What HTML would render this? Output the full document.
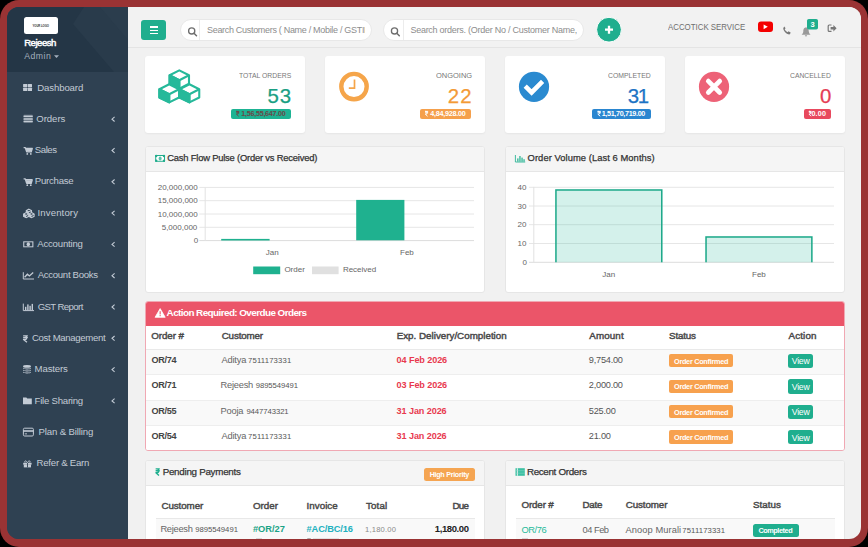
<!DOCTYPE html>
<html><head><meta charset="utf-8">
<style>
*{box-sizing:border-box;margin:0;padding:0}
html,body{width:868px;height:547px;overflow:hidden;background:#000}
body{position:relative;font-family:"Liberation Sans",sans-serif}
.frame{position:absolute;left:0;top:0;width:868px;height:547px;background:#9a3334;border-radius:19px}
.app{position:absolute;left:0;top:0;width:868px;height:547px;clip-path:inset(7px 7px 8px 7px round 12px);background:linear-gradient(to right,#2f4152 128px,#f1f1f1 128px)}
.a{position:absolute}
.t{position:absolute;line-height:1;white-space:nowrap;font-family:"Liberation Sans",sans-serif}
.card{position:absolute;background:#fff;border-radius:3px;box-shadow:0 1px 2px rgba(0,0,0,0.05)}
.panel{position:absolute;background:#fff;border:1px solid #e6e6e6;border-radius:3px;overflow:hidden}
.ph{position:absolute;left:0;top:0;right:0;background:#f5f5f5;border-bottom:1px solid #e6e6e6}
.badge{position:absolute;border-radius:2px}
svg{position:absolute;overflow:visible}
</style></head><body>
<div class="frame"></div>
<div class="app">
  <!-- sidebar -->
  <div class="a" style="left:7px;top:7px;width:121px;height:532px;background:#2f4152"></div>
  <div class="a" style="left:7px;top:7px;width:121px;height:65px;background:#243646"></div>
  <svg style="left:0;top:0" width="1" height="1"><path d="M84 7 L128 7 L128 72 L114 72 L73 24 Z" fill="#293b4b"/><path d="M100 7 L128 7 L128 40 Z" fill="#2b3d4d"/></svg>
  <div class="a" style="left:24px;top:17px;width:34px;height:17px;background:#fff;border-radius:2.5px"></div>
  <svg style="left:0;top:0" width="1" height="1"><path d="M54 55.2 L59 55.2 L56.5 58 Z" fill="#a3afbd"/></svg>
  <!-- topbar -->
  <div class="a" style="left:128px;top:7px;width:733px;height:41px;background:#f2f2f2;border-bottom:1px solid #e4e4e4"></div>
  <div class="a" style="left:141px;top:20px;width:25px;height:20px;background:#1fae8e;border-radius:3px"></div>
  <div class="a" style="left:149.5px;top:26.3px;width:8.5px;height:1.5px;background:#fff"></div>
  <div class="a" style="left:149.5px;top:29.5px;width:8.5px;height:1.5px;background:#fff"></div>
  <div class="a" style="left:149.5px;top:32.7px;width:8.5px;height:1.5px;background:#fff"></div>
  <div class="a" style="left:180px;top:19px;width:192px;height:22px;background:#fff;border:1px solid #e8e8e8;border-radius:11px;overflow:hidden">
  </div>
  <div class="a" style="left:199px;top:20px;width:1px;height:20px;background:#ececec"></div>
  <div class="a" style="left:383px;top:19px;width:201px;height:22px;background:#fff;border:1px solid #e8e8e8;border-radius:11px"></div>
  <div class="a" style="left:403px;top:20px;width:1px;height:20px;background:#ececec"></div>
  <svg style="left:0;top:0" width="1" height="1">
    <circle cx="191.7" cy="30.9" r="3.1" fill="none" stroke="#6e6e6e" stroke-width="1.3"/>
    <line x1="194" y1="33.2" x2="196.5" y2="35.7" stroke="#6e6e6e" stroke-width="1.5" stroke-linecap="round"/>
    <circle cx="394.5" cy="30.9" r="3.1" fill="none" stroke="#6e6e6e" stroke-width="1.3"/>
    <line x1="396.8" y1="33.2" x2="399.3" y2="35.7" stroke="#6e6e6e" stroke-width="1.5" stroke-linecap="round"/>
    <circle cx="609" cy="29.7" r="12.4" fill="#1fae8e" stroke="#fff" stroke-width="1"/>
    <line x1="605" y1="29.7" x2="613" y2="29.7" stroke="#fff" stroke-width="2.3"/>
    <line x1="609" y1="25.7" x2="609" y2="33.7" stroke="#fff" stroke-width="2.3"/>
    <rect x="758" y="21.5" width="15" height="10.5" rx="3" fill="#f40000"/>
    <path d="M763.6 24.4 L763.6 29.2 L767.8 26.8 Z" fill="#fff"/>
    <path d="M783.3 28 C783 30.5 786 34.2 789.5 34.4 L790.8 32.8 L788.6 31.3 L787.5 32.2 C786.3 31.6 785.2 30.4 784.7 29.3 L785.6 28.3 L784.3 26.6 Z" fill="#777"/>
    <path d="M806 27.6 C803.6 27.6 803.3 30 803.3 31.6 C803.3 33.2 802.2 34.2 801.6 34.8 L810.6 34.8 C810 34.2 808.8 33.2 808.8 31.6 C808.8 30 808.4 27.6 806 27.6 Z M804.8 35.2 C805 36 805.5 36.4 806 36.4 C806.5 36.4 807 36 807.2 35.2 Z" fill="#9a9a9a"/>
    <rect x="807" y="19" width="11" height="10.6" rx="1.8" fill="#1fae8e"/>
    <path d="M831.5 25 L829.2 25 C828.6 25 828.2 25.4 828.2 26 L828.2 30.4 C828.2 31 828.6 31.4 829.2 31.4 L831.5 31.4" fill="none" stroke="#777" stroke-width="1.2"/>
    <path d="M830.6 27 L833.4 27 L833.4 25 L836.6 28.2 L833.4 31.4 L833.4 29.4 L830.6 29.4 Z" fill="#777"/>
  </svg>
  <!-- KPI cards -->
  <div class="card" style="left:145px;top:56px;width:160px;height:77px"></div>
  <div class="card" style="left:325px;top:56px;width:160px;height:77px"></div>
  <div class="card" style="left:505px;top:56px;width:160px;height:77px"></div>
  <div class="card" style="left:685px;top:56px;width:160px;height:77px"></div>
  <div class="badge" style="left:231px;top:108.7px;width:60px;height:10.3px;background:#1db393"></div>
  <div class="badge" style="left:420px;top:108.8px;width:51px;height:10.2px;background:#f5a04c"></div>
  <div class="badge" style="left:592.2px;top:108.7px;width:58.8px;height:10.3px;background:#2a86d0"></div>
  <div class="badge" style="left:804px;top:108.8px;width:27px;height:10.2px;background:#e8495e"></div>
  <!-- KPI icons -->
  <svg style="left:0;top:0" width="1" height="1">
    <g fill="none" stroke="#26b99a" stroke-width="2.7" stroke-linejoin="round">
      <!-- cubes drawn below -->
    </g>
    <circle cx="354" cy="86.6" r="12.7" fill="none" stroke="#f5a54a" stroke-width="4.4"/>
    <path d="M354.5 79.5 L354.5 88.2 L348.8 88.2" fill="none" stroke="#f5a54a" stroke-width="1.7"/>
    <circle cx="534" cy="86.8" r="15.1" fill="#2a8ad0"/>
    <path d="M525.2 86.2 L531.6 92.4 L542.6 81.4" fill="none" stroke="#fff" stroke-width="4.6" stroke-linejoin="miter" stroke-miterlimit="3"/>
    <circle cx="714" cy="86.8" r="15.1" fill="#ed6277"/>
    <path d="M708.3 81.1 L719.7 92.5 M719.7 81.1 L708.3 92.5" fill="none" stroke="#fff" stroke-width="4.7" stroke-linecap="round"/>
  </svg>
  <svg style="left:0;top:0" width="1" height="1">
<path d="M179.30 70.40 L189.00 75.30 L189.00 83.80 L179.30 88.70 L169.60 83.80 L169.60 75.30 Z" fill="#fff" stroke="#26b99a" stroke-width="2.1" stroke-linejoin="round"/><path d="M169.60 75.30 L179.30 80.20 L179.30 88.70 L169.60 83.80 Z" fill="#26b99a" stroke="#26b99a" stroke-width="2.1" stroke-linejoin="round"/><path d="M169.60 75.30 L179.30 80.20 L189.00 75.30 M179.30 80.20 L179.30 88.70" fill="none" stroke="#26b99a" stroke-width="2.1" stroke-linejoin="round"/>
<path d="M169.20 84.30 L179.05 89.25 L179.05 97.45 L169.20 102.40 L159.35 97.45 L159.35 89.25 Z" fill="#fff" stroke="#26b99a" stroke-width="2.1" stroke-linejoin="round"/><path d="M159.35 89.25 L169.20 94.20 L169.20 102.40 L159.35 97.45 Z" fill="#26b99a" stroke="#26b99a" stroke-width="2.1" stroke-linejoin="round"/><path d="M159.35 89.25 L169.20 94.20 L179.05 89.25 M169.20 94.20 L169.20 102.40" fill="none" stroke="#26b99a" stroke-width="2.1" stroke-linejoin="round"/>
<path d="M189.40 84.30 L199.25 89.25 L199.25 97.45 L189.40 102.40 L179.55 97.45 L179.55 89.25 Z" fill="#fff" stroke="#26b99a" stroke-width="2.1" stroke-linejoin="round"/><path d="M179.55 89.25 L189.40 94.20 L189.40 102.40 L179.55 97.45 Z" fill="#26b99a" stroke="#26b99a" stroke-width="2.1" stroke-linejoin="round"/><path d="M179.55 89.25 L189.40 94.20 L199.25 89.25 M189.40 94.20 L189.40 102.40" fill="none" stroke="#26b99a" stroke-width="2.1" stroke-linejoin="round"/>
</svg>
  <!-- chart panels -->
  <div class="panel" style="left:145px;top:146px;width:340px;height:147px"><div class="ph" style="height:25px"></div></div>
  <div class="panel" style="left:505px;top:146px;width:340px;height:147px"><div class="ph" style="height:25px"></div></div>
  <svg style="left:0;top:0" width="1" height="1">
<line x1="199.3" y1="187.4" x2="474" y2="187.4" stroke="#e6e6e6" stroke-width="1"/>
<line x1="199.3" y1="200.7" x2="474" y2="200.7" stroke="#e6e6e6" stroke-width="1"/>
<line x1="199.3" y1="214.0" x2="474" y2="214.0" stroke="#e6e6e6" stroke-width="1"/>
<line x1="199.3" y1="227.3" x2="474" y2="227.3" stroke="#e6e6e6" stroke-width="1"/>
<line x1="199.3" y1="240.6" x2="474" y2="240.6" stroke="#dcdcdc" stroke-width="1"/>
<line x1="205.2" y1="187.4" x2="205.2" y2="241" stroke="#e2e2e2" stroke-width="1"/>
<rect x="221.2" y="238.9" width="48.4" height="1.6" fill="#1fb18f"/>
<rect x="356.2" y="199.9" width="48.2" height="40.4" fill="#1fb18f"/>
<rect x="253.2" y="266.5" width="27" height="7.7" fill="#1fb18f"/>
<rect x="312" y="266.5" width="26.6" height="7.7" fill="#e0e0e0"/>
<line x1="529" y1="187.3" x2="834" y2="187.3" stroke="#e6e6e6" stroke-width="1"/>
<line x1="529" y1="206.0" x2="834" y2="206.0" stroke="#e6e6e6" stroke-width="1"/>
<line x1="529" y1="224.7" x2="834" y2="224.7" stroke="#e6e6e6" stroke-width="1"/>
<line x1="529" y1="243.5" x2="834" y2="243.5" stroke="#e6e6e6" stroke-width="1"/>
<line x1="529" y1="262.3" x2="834" y2="262.3" stroke="#dcdcdc" stroke-width="1"/>
<line x1="533.8" y1="186.9" x2="533.8" y2="262.5" stroke="#e2e2e2" stroke-width="1"/>
<rect x="555.2" y="189.3" width="107.3" height="73" fill="rgba(38,185,154,0.2)"/>
<path d="M555.95 262.3 V190.05 H661.75 V262.3" fill="none" stroke="#1ea98a" stroke-width="1.5"/>
<rect x="705.3" y="236.2" width="107.3" height="26.1" fill="rgba(38,185,154,0.2)"/>
<path d="M706.05 262.3 V236.95 H811.85 V262.3" fill="none" stroke="#1ea98a" stroke-width="1.5"/>
<rect x="155.2" y="155" width="9.8" height="6.8" rx="0.6" fill="#22ad8d"/>
<rect x="156.2" y="156" width="7.8" height="4.8" fill="#fff"/>
<circle cx="156.2" cy="156" r="1.2" fill="#22ad8d"/>
<circle cx="164" cy="156" r="1.2" fill="#22ad8d"/>
<circle cx="156.2" cy="160.8" r="1.2" fill="#22ad8d"/>
<circle cx="164" cy="160.8" r="1.2" fill="#22ad8d"/>
<ellipse cx="160.1" cy="158.4" rx="1.5" ry="2.0" fill="#5cc4ad"/>
<path d="M515.4 155 V162 H525.2" fill="none" stroke="#2db696" stroke-width="0.9"/>
<rect x="517.2" y="158.4" width="1.3" height="3.2" fill="#2db696"/>
<rect x="519.3" y="156" width="1.3" height="5.6" fill="#2db696"/>
<rect x="521.4" y="157.6" width="1.3" height="4.0" fill="#2db696"/>
<rect x="523.4" y="159.2" width="1.3" height="2.4" fill="#2db696"/>
</svg>
  <!-- overdue panel -->
  <div class="panel" style="left:145px;top:301px;width:700px;height:149.5px;border-color:#f0a8b3">
    <div class="a" style="left:0;top:0;right:0;height:24px;background:#eb5569"></div>
    <div class="a" style="left:0;top:46.6px;right:0;height:25.3px;background:#f9f9f9;border-top:1px solid #e9e9e9"></div>
    <div class="a" style="left:0;top:71.9px;right:0;height:25.6px;background:#fff;border-top:1px solid #eeeeee"></div>
    <div class="a" style="left:0;top:97.5px;right:0;height:25.7px;background:#f9f9f9;border-top:1px solid #eeeeee"></div>
    <div class="a" style="left:0;top:123.2px;right:0;height:25.7px;background:#fff;border-top:1px solid #eeeeee"></div>
  </div>
  <svg style="left:0;top:0" width="1" height="1">
    <path d="M160.15 308.6 L165.2 317.3 L155.1 317.3 Z" fill="#fff" stroke="#fff" stroke-width="0.8" stroke-linejoin="round"/>
    <rect x="159.6" y="311.2" width="1.1" height="3.2" fill="#eb5569"/>
    <rect x="159.6" y="315.1" width="1.1" height="1.1" fill="#eb5569"/>
  </svg>
  <div class="badge" style="left:668.9px;top:354.10px;width:64.5px;height:13.4px;background:#f7a14e"></div>
<div class="badge" style="left:788.1px;top:353.90px;width:25.3px;height:14.2px;background:#1fae8e;border-radius:2.5px"></div>
<div class="badge" style="left:668.9px;top:379.55px;width:64.5px;height:13.4px;background:#f7a14e"></div>
<div class="badge" style="left:788.1px;top:379.35px;width:25.3px;height:14.2px;background:#1fae8e;border-radius:2.5px"></div>
<div class="badge" style="left:668.9px;top:405.00px;width:64.5px;height:13.4px;background:#f7a14e"></div>
<div class="badge" style="left:788.1px;top:404.80px;width:25.3px;height:14.2px;background:#1fae8e;border-radius:2.5px"></div>
<div class="badge" style="left:668.9px;top:430.45px;width:64.5px;height:13.4px;background:#f7a14e"></div>
<div class="badge" style="left:788.1px;top:430.25px;width:25.3px;height:14.2px;background:#1fae8e;border-radius:2.5px"></div>
  <!-- bottom panels -->
  <div class="panel" style="left:145px;top:460px;width:340px;height:120px">
    <div class="ph" style="height:25px"></div>
    <div class="a" style="left:10px;top:57px;width:319px;height:60px;background:#f9f9f9;border-top:1px solid #e8e8e8"></div>
  </div>
  <div class="badge" style="left:424px;top:468px;width:50.6px;height:12.7px;background:#f5a552;border-radius:2.5px"></div>
  <div class="panel" style="left:505px;top:460px;width:340px;height:120px">
    <div class="ph" style="height:25px"></div>
    <div class="a" style="left:10px;top:57px;width:319px;height:60px;background:#f9f9f9;border-top:1px solid #e8e8e8"></div>
  </div>
  <div class="badge" style="left:753px;top:524px;width:45.6px;height:12.9px;background:#1fae8e;border-radius:2.5px"></div>
  <svg style="left:0;top:0" width="1" height="1">
    <rect x="515.5" y="468.2" width="9.3" height="7.6" fill="#3cc0a3"/>
    <line x1="517.4" y1="468.2" x2="517.4" y2="475.8" stroke="#f5f5f5" stroke-width="0.9"/>
    <line x1="515.5" y1="470.7" x2="524.8" y2="470.7" stroke="#8fd9c8" stroke-width="0.5"/>
    <line x1="515.5" y1="473.2" x2="524.8" y2="473.2" stroke="#8fd9c8" stroke-width="0.5"/>
  </svg>
  <svg style="left:0;top:0" width="1" height="1">
<rect x="23.1" y="84.0" width="4.2" height="3.3" rx="0.5" fill="#c3cbd5"/>
<rect x="27.8" y="84.0" width="4.2" height="3.3" rx="0.5" fill="#c3cbd5"/>
<rect x="23.1" y="87.8" width="4.2" height="3.3" rx="0.5" fill="#c3cbd5"/>
<rect x="27.8" y="87.8" width="4.2" height="3.3" rx="0.5" fill="#c3cbd5"/>
<rect x="23.5" y="115.6" width="9.3" height="1.5" rx="0.5" fill="#c3cbd5"/>
<rect x="23.5" y="118.2" width="9.3" height="1.5" rx="0.5" fill="#c3cbd5"/>
<rect x="23.5" y="120.8" width="9.3" height="1.5" rx="0.5" fill="#c3cbd5"/>
<rect x="23.5" y="114.6" width="9.3" height="8.5" rx="1" fill="#c3cbd5" fill-opacity="0.25"/>
<path d="M23.6 147.60000000000002 H25.3 L26.7 151.9 H31.2 L32.2 148.5 H25.6" fill="none" stroke="#c3cbd5" stroke-width="1.4" stroke-linejoin="round"/>
<rect x="26.1" y="148.9" width="5.6" height="2.8" fill="#c3cbd5"/>
<circle cx="27.3" cy="153.9" r="0.9" fill="#c3cbd5"/><circle cx="30.8" cy="153.9" r="0.9" fill="#c3cbd5"/>
<path d="M23.6 178.9 H25.3 L26.7 183.2 H31.2 L32.2 179.79999999999998 H25.6" fill="none" stroke="#c3cbd5" stroke-width="1.4" stroke-linejoin="round"/>
<rect x="26.1" y="180.2" width="5.6" height="2.8" fill="#c3cbd5"/>
<circle cx="27.3" cy="185.2" r="0.9" fill="#c3cbd5"/><circle cx="30.8" cy="185.2" r="0.9" fill="#c3cbd5"/>
<path d="M28.90 209.20 L31.50 210.60 L31.50 213.00 L28.90 214.40 L26.30 213.00 L26.30 210.60 Z" fill="#2f4152" stroke="#c3cbd5" stroke-width="1.1"/><path d="M26.30 210.60 L28.90 212.00 L28.90 214.40 L26.30 213.00 Z" fill="#c3cbd5"/><path d="M26.30 210.60 L28.90 212.00 L31.50 210.60" fill="none" stroke="#c3cbd5" stroke-width="1.1"/>
<path d="M26.20 212.60 L28.80 214.00 L28.80 216.30 L26.20 217.70 L23.60 216.30 L23.60 214.00 Z" fill="#2f4152" stroke="#c3cbd5" stroke-width="1.1"/><path d="M23.60 214.00 L26.20 215.40 L26.20 217.70 L23.60 216.30 Z" fill="#c3cbd5"/><path d="M23.60 214.00 L26.20 215.40 L28.80 214.00" fill="none" stroke="#c3cbd5" stroke-width="1.1"/>
<path d="M31.50 212.60 L34.10 214.00 L34.10 216.30 L31.50 217.70 L28.90 216.30 L28.90 214.00 Z" fill="#2f4152" stroke="#c3cbd5" stroke-width="1.1"/><path d="M28.90 214.00 L31.50 215.40 L31.50 217.70 L28.90 216.30 Z" fill="#c3cbd5"/><path d="M28.90 214.00 L31.50 215.40 L34.10 214.00" fill="none" stroke="#c3cbd5" stroke-width="1.1"/>
<rect x="23.2" y="241.3" width="10.2" height="6" fill="#c3cbd5"/>
<rect x="24.3" y="242.3" width="8" height="4" fill="#2f4152"/>
<ellipse cx="28.3" cy="244.3" rx="1.7" ry="2" fill="#c3cbd5"/>
<path d="M23.3 272.2 V279 H34" fill="none" stroke="#c3cbd5" stroke-width="1"/>
<path d="M24.6 277.3 L27.4 274.2 L29.4 276 L33.2 272.6" fill="none" stroke="#c3cbd5" stroke-width="1.3"/>
<path d="M23.3 303.6 V310.6 H34" fill="none" stroke="#c3cbd5" stroke-width="1"/>
<rect x="25.0" y="306.8" width="1.4" height="3.3" fill="#c3cbd5"/>
<rect x="27.2" y="304.4" width="1.4" height="5.7" fill="#c3cbd5"/>
<rect x="29.4" y="305.8" width="1.4" height="4.3" fill="#c3cbd5"/>
<rect x="31.6" y="303.9" width="1.4" height="6.2" fill="#c3cbd5"/>
<ellipse cx="27" cy="366.4" rx="4" ry="1.3" fill="#c3cbd5"/>
<path d="M23 367.40000000000003 V368.3 C23 369.90000000000003 31 369.90000000000003 31 368.3 V367.40000000000003 C31 369.0 23 369.0 23 367.40000000000003 Z" fill="#c3cbd5"/>
<path d="M23 369.40000000000003 V370.3 C23 371.90000000000003 31 371.90000000000003 31 370.3 V369.40000000000003 C31 371.0 23 371.0 23 369.40000000000003 Z" fill="#c3cbd5"/>
<path d="M23 371.40000000000003 V372.3 C23 373.90000000000003 31 373.90000000000003 31 372.3 V371.40000000000003 C31 373.0 23 373.0 23 371.40000000000003 Z" fill="#c3cbd5"/>
<path d="M23 397.5 H26.3 L27.3 398.6 H31.8 V404.3 H23 Z" fill="#c3cbd5"/>
<rect x="23.4" y="428.2" width="10" height="7.8" rx="1.2" fill="none" stroke="#c3cbd5" stroke-width="1"/>
<rect x="23.4" y="430.2" width="10" height="1.6" fill="#c3cbd5"/>
<rect x="24.8" y="433.4" width="2.2" height="0.9" fill="#c3cbd5"/>
<rect x="23.2" y="462.8" width="8.4" height="1.8" fill="#c3cbd5"/>
<rect x="23.8" y="464.4" width="7.2" height="3" fill="#c3cbd5"/>
<rect x="27" y="462.8" width="0.9" height="4.6" fill="#2f4152"/>
<path d="M27.4 462.6 C26 460 24 460.6 25 462.6 M27.4 462.6 C28.8 460 30.8 460.6 29.8 462.6" fill="none" stroke="#c3cbd5" stroke-width="0.9"/>
<path d="M114.6 116.90 L112 119.20 L114.6 121.50" fill="none" stroke="#c3cbd5" stroke-width="1.1"/>
<path d="M114.6 148.20 L112 150.50 L114.6 152.80" fill="none" stroke="#c3cbd5" stroke-width="1.1"/>
<path d="M114.6 179.50 L112 181.80 L114.6 184.10" fill="none" stroke="#c3cbd5" stroke-width="1.1"/>
<path d="M114.6 210.80 L112 213.10 L114.6 215.40" fill="none" stroke="#c3cbd5" stroke-width="1.1"/>
<path d="M114.6 242.10 L112 244.40 L114.6 246.70" fill="none" stroke="#c3cbd5" stroke-width="1.1"/>
<path d="M114.6 273.40 L112 275.70 L114.6 278.00" fill="none" stroke="#c3cbd5" stroke-width="1.1"/>
<path d="M114.6 304.70 L112 307.00 L114.6 309.30" fill="none" stroke="#c3cbd5" stroke-width="1.1"/>
<path d="M114.6 336.00 L112 338.30 L114.6 340.60" fill="none" stroke="#c3cbd5" stroke-width="1.1"/>
<path d="M114.6 367.30 L112 369.60 L114.6 371.90" fill="none" stroke="#c3cbd5" stroke-width="1.1"/>
<path d="M114.6 398.60 L112 400.90 L114.6 403.20" fill="none" stroke="#c3cbd5" stroke-width="1.1"/>
</svg>
  <div class="a" style="left:256px;top:537.5px;width:6px;height:1.5px;background:#d8d8d8"></div>
  <div class="a" style="left:307px;top:537.5px;width:4px;height:1.5px;background:#b0b0b0;border-radius:2px 2px 0 0"></div>
  <div class="a" style="left:313px;top:538px;width:26px;height:1px;background:#e2e2e2"></div>
  <div class="a" style="left:522px;top:537.5px;width:6px;height:1.5px;background:#d8d8d8"></div>
  <svg style="left:0;top:0" width="1" height="1">
<path d="M236.17 111.39 L239.23 111.39 M236.17 112.77 L239.23 112.77 M236.17 111.39 L237.19 111.39 C238.82 111.39 238.82 114.16 237.19 114.16 L236.41 114.16 L238.65 116.21" fill="none" stroke="#6a4848" stroke-width="1.0" stroke-linejoin="round"/>
<path d="M425.07 111.39 L428.13 111.39 M425.07 112.77 L428.13 112.77 M425.07 111.39 L426.09 111.39 C427.72 111.39 427.72 114.16 426.09 114.16 L425.31 114.16 L427.55 116.21" fill="none" stroke="#ffffff" stroke-width="1.0" stroke-linejoin="round"/>
<path d="M597.58 111.39 L600.82 111.39 M597.58 112.77 L600.82 112.77 M597.58 111.39 L598.66 111.39 C600.39 111.39 600.39 114.16 598.66 114.16 L597.83 114.16 L600.21 116.21" fill="none" stroke="#ffffff" stroke-width="1.0" stroke-linejoin="round"/>
<path d="M808.85 111.39 L811.55 111.39 M808.85 112.77 L811.55 112.77 M808.85 111.39 L809.75 111.39 C811.19 111.39 811.19 114.16 809.75 114.16 L809.06 114.16 L811.04 116.21" fill="none" stroke="#ffffff" stroke-width="1.0" stroke-linejoin="round"/>
<path d="M155.63 468.84 L159.77 468.84 M155.63 470.76 L159.77 470.76 M155.63 468.84 L157.01 468.84 C159.22 468.84 159.22 472.69 157.01 472.69 L155.95 472.69 L158.99 475.53" fill="none" stroke="#1fae8e" stroke-width="1.4" stroke-linejoin="round"/>
<path d="M23.16 335.81 L27.84 335.81 M23.16 337.67 L27.84 337.67 M23.16 335.81 L24.72 335.81 C27.22 335.81 27.22 339.52 24.72 339.52 L23.52 339.52 L26.96 342.24" fill="none" stroke="#c3cbd5" stroke-width="1.3" stroke-linejoin="round"/>
</svg>
  <span class="t" style="left:32.60px;top:25.20px;font-size:2.8px;color:#333;font-weight:700;letter-spacing:-0.100px">YOUR LOGO</span>
<span class="t" style="left:24.20px;top:38.40px;font-size:9.6px;color:#ffffff;-webkit-text-stroke-width:0.45px;letter-spacing:-0.500px">Rejeesh</span>
<span class="t" style="left:24.20px;top:52.00px;font-size:8.7px;color:#a3afbd;letter-spacing:0.500px">Admin</span>
<span class="t" style="left:37.30px;top:82.50px;font-size:9.6px;color:#c3cbd5;letter-spacing:-0.125px">Dashboard</span>
<span class="t" style="left:36.30px;top:113.80px;font-size:9.6px;color:#c3cbd5;letter-spacing:-0.060px">Orders</span>
<span class="t" style="left:34.80px;top:145.10px;font-size:9.6px;color:#c3cbd5;letter-spacing:-0.450px">Sales</span>
<span class="t" style="left:34.80px;top:176.40px;font-size:9.6px;color:#c3cbd5;letter-spacing:-0.243px">Purchase</span>
<span class="t" style="left:37.50px;top:207.70px;font-size:9.6px;color:#c3cbd5;letter-spacing:0.125px">Inventory</span>
<span class="t" style="left:37.20px;top:239.00px;font-size:9.6px;color:#c3cbd5;letter-spacing:-0.189px">Accounting</span>
<span class="t" style="left:37.70px;top:270.30px;font-size:9.6px;color:#c3cbd5;letter-spacing:-0.300px">Account Books</span>
<span class="t" style="left:37.70px;top:301.60px;font-size:9.6px;color:#c3cbd5;letter-spacing:-0.600px">GST Report</span>
<span class="t" style="left:32.00px;top:332.90px;font-size:9.6px;color:#c3cbd5;letter-spacing:-0.336px">Cost Management</span>
<span class="t" style="left:34.60px;top:364.20px;font-size:9.6px;color:#c3cbd5;letter-spacing:-0.133px">Masters</span>
<span class="t" style="left:34.60px;top:395.50px;font-size:9.6px;color:#c3cbd5;letter-spacing:-0.236px">File Sharing</span>
<span class="t" style="left:38.60px;top:426.80px;font-size:9.6px;color:#c3cbd5;letter-spacing:-0.138px">Plan &amp; Billing</span>
<span class="t" style="left:36.60px;top:458.10px;font-size:9.6px;color:#c3cbd5;letter-spacing:-0.245px">Refer &amp; Earn</span>
<div style="position:absolute;left:0;top:0;width:868px;height:547px;clip-path:polygon(200px 19px,365px 19px,365px 41px,200px 41px)"><span class="t" style="left:207.00px;top:26.40px;font-size:9.0px;color:#8d8d8d;letter-spacing:-0.307px">Search Customers ( Name / Mobile / GSTIN</span></div>
<div style="position:absolute;left:0;top:0;width:868px;height:547px;clip-path:polygon(404px 19px,577px 19px,577px 41px,404px 41px)"><span class="t" style="left:410.40px;top:26.40px;font-size:9.0px;color:#8d8d8d;letter-spacing:-0.258px">Search orders. (Order No / Customer Name, Mobile )</span></div>
<span class="t" style="left:668.00px;top:22.30px;font-size:9.5px;color:#6e6e6e;transform:scaleX(0.8280);transform-origin:0 0">ACCOTICK SERVICE</span>
<span class="t" style="left:810.50px;top:20.60px;font-size:7.5px;color:#ffffff;font-weight:700">3</span>
<span class="t" style="left:238.60px;top:71.90px;font-size:7.8px;color:#777777;transform:scaleX(0.8750);transform-origin:0 0">TOTAL ORDERS</span>
<span class="t" style="left:435.60px;top:71.90px;font-size:7.8px;color:#777777;transform:scaleX(0.9595);transform-origin:0 0">ONGOING</span>
<span class="t" style="left:607.90px;top:71.90px;font-size:7.8px;color:#777777;transform:scaleX(0.8796);transform-origin:0 0">COMPLETED</span>
<span class="t" style="left:790.00px;top:71.90px;font-size:7.8px;color:#777777;transform:scaleX(0.8723);transform-origin:0 0">CANCELLED</span>
<span class="t" style="left:267.60px;top:85.60px;font-size:20.4px;color:#1a9f83;-webkit-text-stroke-width:0.25px;letter-spacing:0.700px">53</span>
<span class="t" style="left:447.70px;top:85.60px;font-size:20.4px;color:#f39a36;-webkit-text-stroke-width:0.25px;letter-spacing:1.300px">22</span>
<span class="t" style="left:627.70px;top:85.60px;font-size:20.4px;color:#1d74c4;-webkit-text-stroke-width:0.25px;letter-spacing:-1.200px">31</span>
<span class="t" style="left:820.00px;top:85.60px;font-size:20.4px;color:#e53e55;-webkit-text-stroke-width:0.25px">0</span>
<span class="t" style="left:241.30px;top:110.30px;font-size:7.2px;color:#6a4848;font-weight:700;letter-spacing:-0.269px">1,56,55,647.00</span>
<span class="t" style="left:430.20px;top:110.30px;font-size:7.2px;color:#ffffff;font-weight:700;letter-spacing:-0.240px">4,84,928.00</span>
<span class="t" style="left:601.70px;top:110.30px;font-size:7.2px;color:#ffffff;font-weight:700;letter-spacing:-0.331px">1,51,70,719.00</span>
<span class="t" style="left:811.40px;top:110.30px;font-size:7.2px;color:#ffffff;font-weight:700;letter-spacing:0.233px">0.00</span>
<span class="t" style="left:167.20px;top:152.70px;font-size:9.4px;color:#333333;-webkit-text-stroke-width:0.25px;letter-spacing:-0.194px">Cash Flow Pulse (Order vs Received)</span>
<span class="t" style="left:527.60px;top:152.70px;font-size:9.4px;color:#333333;-webkit-text-stroke-width:0.25px;letter-spacing:0.056px">Order Volume (Last 6 Months)</span>
<span class="t" style="left:157.70px;top:184.00px;font-size:8.0px;color:#666666">20,000,000</span>
<span class="t" style="left:157.70px;top:197.30px;font-size:8.0px;color:#666666">15,000,000</span>
<span class="t" style="left:157.70px;top:210.60px;font-size:8.0px;color:#666666">10,000,000</span>
<span class="t" style="left:161.70px;top:223.90px;font-size:8.0px;color:#666666">5,000,000</span>
<span class="t" style="left:193.70px;top:237.20px;font-size:8.0px;color:#666666">0</span>
<span class="t" style="left:265.80px;top:249.30px;font-size:8.0px;color:#666666">Jan</span>
<span class="t" style="left:400.00px;top:249.30px;font-size:8.0px;color:#666666">Feb</span>
<span class="t" style="left:284.40px;top:266.30px;font-size:8.0px;color:#666666">Order</span>
<span class="t" style="left:342.90px;top:266.30px;font-size:8.0px;color:#666666">Received</span>
<span class="t" style="left:517.50px;top:183.80px;font-size:8.0px;color:#666666">40</span>
<span class="t" style="left:517.50px;top:202.50px;font-size:8.0px;color:#666666">30</span>
<span class="t" style="left:517.50px;top:221.20px;font-size:8.0px;color:#666666">20</span>
<span class="t" style="left:517.50px;top:240.00px;font-size:8.0px;color:#666666">10</span>
<span class="t" style="left:522.50px;top:258.90px;font-size:8.0px;color:#666666">0</span>
<span class="t" style="left:602.30px;top:270.80px;font-size:8.0px;color:#666666">Jan</span>
<span class="t" style="left:752.00px;top:270.80px;font-size:8.0px;color:#666666">Feb</span>
<span class="t" style="left:166.60px;top:307.90px;font-size:9.9px;color:#ffffff;font-weight:700;letter-spacing:-0.567px">Action Required: Overdue Orders</span>
<span class="t" style="left:151.30px;top:331.00px;font-size:9.8px;color:#4a4a4a;-webkit-text-stroke-width:0.45px;letter-spacing:-0.100px">Order #</span>
<span class="t" style="left:221.70px;top:331.00px;font-size:9.8px;color:#4a4a4a;-webkit-text-stroke-width:0.45px;letter-spacing:-0.157px">Customer</span>
<span class="t" style="left:396.70px;top:331.00px;font-size:9.8px;color:#4a4a4a;-webkit-text-stroke-width:0.45px">Exp. Delivery/Completion</span>
<span class="t" style="left:589.30px;top:331.00px;font-size:9.8px;color:#4a4a4a;-webkit-text-stroke-width:0.45px;letter-spacing:0.120px">Amount</span>
<span class="t" style="left:669.10px;top:331.00px;font-size:9.8px;color:#4a4a4a;-webkit-text-stroke-width:0.45px;letter-spacing:-0.200px">Status</span>
<span class="t" style="left:788.60px;top:331.00px;font-size:9.8px;color:#4a4a4a;-webkit-text-stroke-width:0.45px;letter-spacing:0.120px">Action</span>
<span class="t" style="left:151.50px;top:355.90px;font-size:9.1px;color:#444444;font-weight:700;letter-spacing:-0.300px">OR/74</span>
<span class="t" style="left:221.60px;top:355.90px;font-size:9.3px;color:#666666;letter-spacing:-0.220px">Aditya</span>
<span class="t" style="left:248.10px;top:356.90px;font-size:7.7px;color:#555555;letter-spacing:0.167px">7511173331</span>
<span class="t" style="left:396.60px;top:355.90px;font-size:9.1px;color:#e8394f;font-weight:700;letter-spacing:-0.100px">04 Feb 2026</span>
<span class="t" style="left:588.80px;top:355.90px;font-size:9.2px;color:#555555;letter-spacing:-0.229px">9,754.00</span>
<span class="t" style="left:674.00px;top:358.00px;font-size:7.3px;color:#ffffff;font-weight:700;letter-spacing:-0.286px">Order Confirmed</span>
<span class="t" style="left:791.80px;top:357.30px;font-size:8.7px;color:#ffffff;letter-spacing:-0.267px">View</span>
<span class="t" style="left:151.50px;top:381.35px;font-size:9.1px;color:#444444;font-weight:700;letter-spacing:-0.300px">OR/71</span>
<span class="t" style="left:220.60px;top:381.35px;font-size:9.3px;color:#666666;letter-spacing:-0.250px">Rejeesh</span>
<span class="t" style="left:255.70px;top:382.35px;font-size:7.7px;color:#555555;letter-spacing:-0.056px">9895549491</span>
<span class="t" style="left:396.60px;top:381.35px;font-size:9.1px;color:#e8394f;font-weight:700;letter-spacing:-0.100px">03 Feb 2026</span>
<span class="t" style="left:588.80px;top:381.35px;font-size:9.2px;color:#555555;letter-spacing:-0.229px">2,000.00</span>
<span class="t" style="left:674.00px;top:383.45px;font-size:7.3px;color:#ffffff;font-weight:700;letter-spacing:-0.286px">Order Confirmed</span>
<span class="t" style="left:791.80px;top:382.75px;font-size:8.7px;color:#ffffff;letter-spacing:-0.267px">View</span>
<span class="t" style="left:151.50px;top:406.80px;font-size:9.1px;color:#444444;font-weight:700;letter-spacing:-0.300px">OR/55</span>
<span class="t" style="left:220.60px;top:406.80px;font-size:9.3px;color:#666666;letter-spacing:-0.225px">Pooja</span>
<span class="t" style="left:246.40px;top:407.80px;font-size:7.7px;color:#555555;letter-spacing:-0.056px">9447743321</span>
<span class="t" style="left:396.60px;top:406.80px;font-size:9.1px;color:#e8394f;font-weight:700;letter-spacing:-0.100px">31 Jan 2026</span>
<span class="t" style="left:588.80px;top:406.80px;font-size:9.2px;color:#555555;letter-spacing:-0.229px">525.00</span>
<span class="t" style="left:674.00px;top:408.90px;font-size:7.3px;color:#ffffff;font-weight:700;letter-spacing:-0.286px">Order Confirmed</span>
<span class="t" style="left:791.80px;top:408.20px;font-size:8.7px;color:#ffffff;letter-spacing:-0.267px">View</span>
<span class="t" style="left:151.50px;top:432.25px;font-size:9.1px;color:#444444;font-weight:700;letter-spacing:-0.300px">OR/54</span>
<span class="t" style="left:221.60px;top:432.25px;font-size:9.3px;color:#666666;letter-spacing:-0.220px">Aditya</span>
<span class="t" style="left:248.10px;top:433.25px;font-size:7.7px;color:#555555;letter-spacing:0.167px">7511173331</span>
<span class="t" style="left:396.60px;top:432.25px;font-size:9.1px;color:#e8394f;font-weight:700;letter-spacing:-0.100px">31 Jan 2026</span>
<span class="t" style="left:588.80px;top:432.25px;font-size:9.2px;color:#555555;letter-spacing:-0.229px">21.00</span>
<span class="t" style="left:674.00px;top:434.35px;font-size:7.3px;color:#ffffff;font-weight:700;letter-spacing:-0.286px">Order Confirmed</span>
<span class="t" style="left:791.80px;top:433.65px;font-size:8.7px;color:#ffffff;letter-spacing:-0.267px">View</span>
<span class="t" style="left:162.70px;top:467.00px;font-size:9.8px;color:#333333;-webkit-text-stroke-width:0.25px;letter-spacing:-0.273px">Pending Payments</span>
<span class="t" style="left:429.70px;top:471.30px;font-size:7.2px;color:#ffffff;font-weight:700;letter-spacing:-0.300px">High Priority</span>
<span class="t" style="left:161.40px;top:500.60px;font-size:9.8px;color:#4a4a4a;-webkit-text-stroke-width:0.45px;letter-spacing:-0.086px">Customer</span>
<span class="t" style="left:252.90px;top:500.60px;font-size:9.8px;color:#4a4a4a;-webkit-text-stroke-width:0.45px;letter-spacing:0.050px">Order</span>
<span class="t" style="left:306.60px;top:500.60px;font-size:9.8px;color:#4a4a4a;-webkit-text-stroke-width:0.45px;letter-spacing:0.017px">Invoice</span>
<span class="t" style="left:366.00px;top:500.60px;font-size:9.8px;color:#4a4a4a;-webkit-text-stroke-width:0.45px;letter-spacing:0.125px">Total</span>
<span class="t" style="left:452.40px;top:500.60px;font-size:9.8px;color:#4a4a4a;-webkit-text-stroke-width:0.45px;letter-spacing:-0.700px">Due</span>
<span class="t" style="left:160.40px;top:525.00px;font-size:9.3px;color:#666666;letter-spacing:-0.267px">Rejeesh</span>
<span class="t" style="left:195.20px;top:526.00px;font-size:7.7px;color:#555555">9895549491</span>
<span class="t" style="left:252.90px;top:525.00px;font-size:9.3px;color:#1ba386;font-weight:700">#OR/27</span>
<span class="t" style="left:306.60px;top:525.00px;font-size:9.3px;color:#22b1bf;font-weight:700;letter-spacing:-0.162px">#AC/BC/16</span>
<span class="t" style="left:365.00px;top:526.00px;font-size:7.6px;color:#8a8a8a;letter-spacing:0.200px">1,180.00</span>
<span class="t" style="left:434.80px;top:524.00px;font-size:9.5px;color:#222222;font-weight:700;letter-spacing:-0.400px">1,180.00</span>
<span class="t" style="left:526.90px;top:467.00px;font-size:9.8px;color:#333333;-webkit-text-stroke-width:0.25px;letter-spacing:-0.317px">Recent Orders</span>
<span class="t" style="left:521.40px;top:500.40px;font-size:9.8px;color:#4a4a4a;-webkit-text-stroke-width:0.45px;letter-spacing:-0.133px">Order #</span>
<span class="t" style="left:582.60px;top:500.40px;font-size:9.8px;color:#4a4a4a;-webkit-text-stroke-width:0.45px;letter-spacing:-0.300px">Date</span>
<span class="t" style="left:625.70px;top:500.40px;font-size:9.8px;color:#4a4a4a;-webkit-text-stroke-width:0.45px;letter-spacing:-0.100px">Customer</span>
<span class="t" style="left:753.00px;top:500.40px;font-size:9.8px;color:#4a4a4a;-webkit-text-stroke-width:0.45px">Status</span>
<span class="t" style="left:521.40px;top:525.50px;font-size:9.3px;color:#26b99a;letter-spacing:-0.425px">OR/76</span>
<span class="t" style="left:582.60px;top:525.50px;font-size:9.3px;color:#666666;letter-spacing:-0.500px">04 Feb</span>
<span class="t" style="left:625.60px;top:525.50px;font-size:9.3px;color:#666666;letter-spacing:0.064px">Anoop Murali</span>
<span class="t" style="left:682.30px;top:526.50px;font-size:7.7px;color:#555555;letter-spacing:0.122px">7511173331</span>
<span class="t" style="left:758.40px;top:527.10px;font-size:7.3px;color:#ffffff;font-weight:700;letter-spacing:-0.425px">Completed</span>
</div>
</body></html>
